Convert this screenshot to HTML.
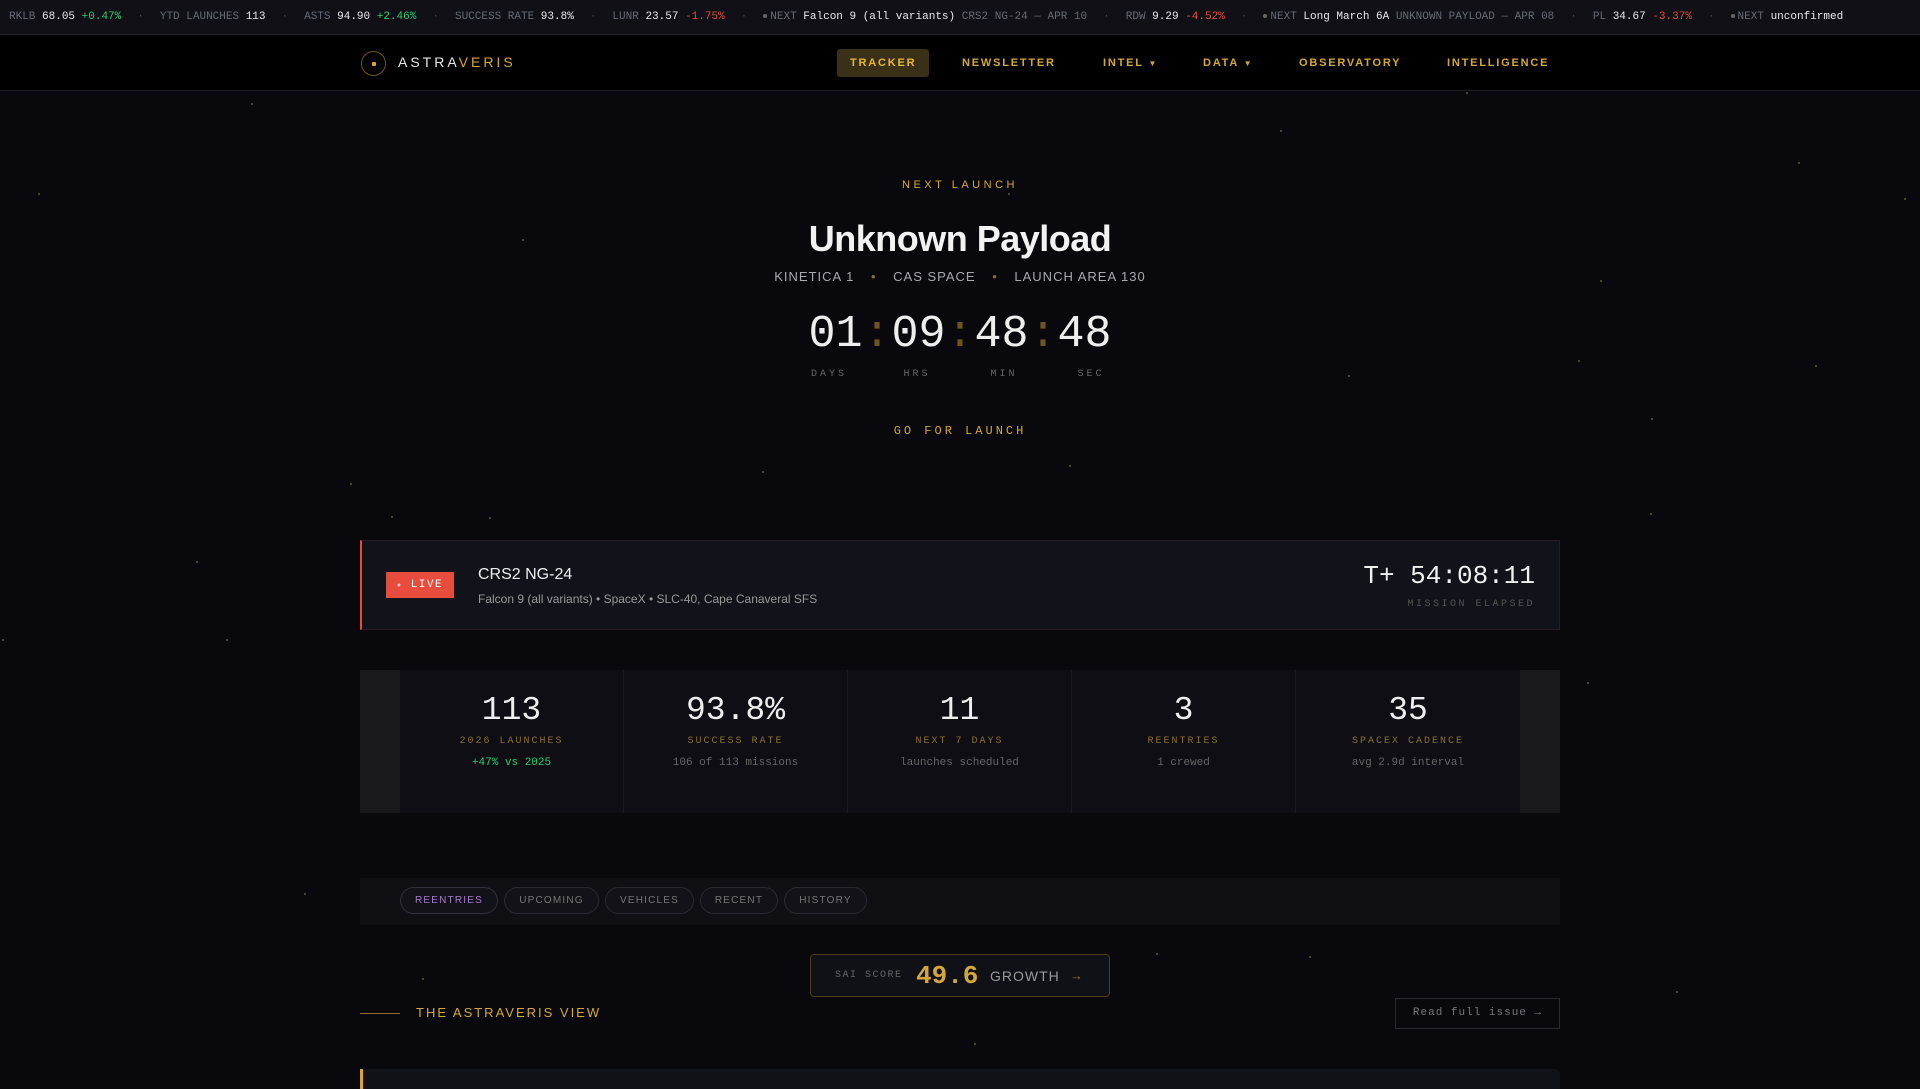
<!DOCTYPE html>
<html><head><meta charset="utf-8">
<style>
*{box-sizing:border-box;margin:0;padding:0}
body{width:1920px;height:1080px;overflow:hidden;background:#09090d;font-family:"Liberation Sans",sans-serif;color:#ddd;position:relative}
.mono{font-family:"Liberation Mono",monospace}
.ticker{position:absolute;left:0;top:0;width:1920px;height:35px;background:#101016;border-bottom:1px solid #24242c;white-space:nowrap;font-family:"Liberation Mono",monospace;font-size:11px;line-height:35px;padding-left:9px;color:#666a76;letter-spacing:0}
.ticker b{font-weight:normal;color:#e8e8ee}
.ticker .g{color:#2ecc71}.ticker .r{color:#e74c3c}
.ticker .s{color:#444;padding:0 16px}
.ticker .d{display:inline-block;width:4px;height:4px;border-radius:50%;background:#666;vertical-align:middle;margin-right:3px}
nav{position:absolute;top:35px;left:0;width:1920px;height:56px;background:#000;border-bottom:1px solid #1d1d24}
.logo{position:absolute;left:361px;top:16px;width:25px;height:25px;border:1px solid #6b5520;border-radius:50%}
.logo:after{content:"";position:absolute;left:10px;top:10px;width:4px;height:4px;background:#d4a838;border-radius:1px}
.brand{position:absolute;left:398px;top:19px;font-size:14px;letter-spacing:3px;color:#e8e8e8}
.brand span{color:#d4a838}
.nv{position:absolute;top:14px;height:28px;line-height:28px;font-size:11px;font-weight:bold;letter-spacing:1.8px;color:#d4a838}
.nv.a{background:#3a3018;border-radius:3px;padding:0 13px;color:#e8b83a}
.star{position:absolute;width:2px;height:2px;background:#8a7a50;border-radius:50%;opacity:.7}
.c{position:absolute;left:0;width:1920px;text-align:center}
.live{position:absolute;left:360px;top:540px;width:1200px;height:90px;background:#12121a;border:1px solid #2a1c22;border-left:2px solid #e74c3c}
.stats{position:absolute;left:360px;top:670px;width:1200px;height:143px;background:#0e0e14}
.cell{position:absolute;top:0;width:224px;height:143px;text-align:center;border-right:1px solid #1a1a22}
.cell .n{font-family:"Liberation Mono",monospace;font-size:33px;color:#eee;margin-top:22px}
.cell .l{font-family:"Liberation Mono",monospace;font-size:10px;letter-spacing:2px;color:#8a7030;margin-top:7px}
.cell .s{font-family:"Liberation Mono",monospace;font-size:11px;color:#666;margin-top:10px}
.pill{position:absolute;top:887px;height:27px;line-height:25px;border:1px solid #2a2a33;border-radius:14px;font-size:10px;letter-spacing:1.2px;color:#777;text-align:center;background:#121218}
</style></head><body>
<div class="ticker">RKLB <b>68.05</b> <span class="g">+0.47%</span><span class="s">·</span>YTD LAUNCHES <b>113</b><span class="s">·</span>ASTS <b>94.90</b> <span class="g">+2.46%</span><span class="s">·</span>SUCCESS RATE <b>93.8%</b><span class="s">·</span>LUNR <b>23.57</b> <span class="r">-1.75%</span><span class="s">·</span><span class="d"></span>NEXT <b>Falcon 9 (all variants)</b> CRS2 NG-24 — APR 10<span class="s">·</span>RDW <b>9.29</b> <span class="r">-4.52%</span><span class="s">·</span><span class="d"></span>NEXT <b>Long March 6A</b> UNKNOWN PAYLOAD — APR 08<span class="s">·</span>PL <b>34.67</b> <span class="r">-3.37%</span><span class="s">·</span><span class="d"></span>NEXT <b>unconfirmed</b></div>
<nav>
<div class="logo"></div>
<div class="brand">ASTRA<span>VERIS</span></div>
<div class="nv a" style="left:837px">TRACKER</div>
<div class="nv" style="left:962px">NEWSLETTER</div>
<div class="nv" style="left:1103px">INTEL <span style="font-size:8px">▼</span></div>
<div class="nv" style="left:1203px">DATA <span style="font-size:8px">▼</span></div>
<div class="nv" style="left:1299px">OBSERVATORY</div>
<div class="nv" style="left:1447px">INTELLIGENCE</div>
</nav>
<div class="star" style="left:251px;top:103px"></div><div class="star" style="left:38px;top:193px"></div><div class="star" style="left:522px;top:239px"></div><div class="star" style="left:1280px;top:130px"></div><div class="star" style="left:1466px;top:92px"></div><div class="star" style="left:1798px;top:162px"></div><div class="star" style="left:1904px;top:198px"></div><div class="star" style="left:1578px;top:360px"></div><div class="star" style="left:1348px;top:375px"></div><div class="star" style="left:1069px;top:465px"></div><div class="star" style="left:391px;top:516px"></div><div class="star" style="left:489px;top:517px"></div><div class="star" style="left:196px;top:561px"></div><div class="star" style="left:350px;top:483px"></div><div class="star" style="left:2px;top:639px"></div><div class="star" style="left:226px;top:639px"></div><div class="star" style="left:1650px;top:513px"></div><div class="star" style="left:1587px;top:682px"></div><div class="star" style="left:304px;top:893px"></div><div class="star" style="left:422px;top:978px"></div><div class="star" style="left:1156px;top:953px"></div><div class="star" style="left:1309px;top:956px"></div><div class="star" style="left:1676px;top:991px"></div><div class="star" style="left:974px;top:1043px"></div><div class="star" style="left:1008px;top:193px"></div><div class="star" style="left:1600px;top:280px"></div><div class="star" style="left:1815px;top:365px"></div><div class="star" style="left:1651px;top:418px"></div><div class="star" style="left:762px;top:471px"></div>
<div class="c" style="top:179px;font-size:11px;letter-spacing:3.5px;color:#d4a838">NEXT LAUNCH</div>
<div class="c" style="top:218px;font-size:36px;font-weight:bold;color:#f2f2f2;letter-spacing:-.5px">Unknown Payload</div>
<div class="c" style="top:269px;font-size:13px;letter-spacing:1px;color:#a8a8b0">KINETICA 1 <span style="color:#8a7030;padding:0 12px">•</span> CAS SPACE <span style="color:#8a7030;padding:0 12px">•</span> LAUNCH AREA 130</div>
<div class="c mono" style="top:307px;font-size:45px;color:#eee;line-height:56px">01<span style="color:#6b5520;padding:0 1px">:</span>09<span style="color:#6b5520;padding:0 1px">:</span>48<span style="color:#6b5520;padding:0 1px">:</span>48</div>
<div class="mono" style="position:absolute;top:369px;left:800px;width:58px;text-align:center;font-size:10px;letter-spacing:3px;color:#666">DAYS</div>
<div class="mono" style="position:absolute;top:369px;left:888px;width:58px;text-align:center;font-size:10px;letter-spacing:3px;color:#666">HRS</div>
<div class="mono" style="position:absolute;top:369px;left:975px;width:58px;text-align:center;font-size:10px;letter-spacing:3px;color:#666">MIN</div>
<div class="mono" style="position:absolute;top:369px;left:1062px;width:58px;text-align:center;font-size:10px;letter-spacing:3px;color:#666">SEC</div>
<div class="c mono" style="top:424px;font-size:12px;letter-spacing:3px;color:#d4a838">GO FOR LAUNCH</div>
<div class="live">
<div style="position:absolute;left:24px;top:31px;width:68px;height:26px;background:#e74c3c;color:#fff;font-family:'Liberation Mono',monospace;font-size:11px;letter-spacing:1.5px;line-height:26px;text-align:center"><span style="font-size:7px;opacity:.7">●</span> LIVE</div>
<div style="position:absolute;left:116px;top:25px;font-size:16px;color:#eee">CRS2 NG-24</div>
<div style="position:absolute;left:116px;top:51px;font-size:12px;color:#999">Falcon 9 (all variants) • SpaceX • SLC-40, Cape Canaveral SFS</div>
<div class="mono" style="position:absolute;right:24px;top:20px;font-size:26px;color:#f0f0f0">T+ 54:08:11</div>
<div class="mono" style="position:absolute;right:24px;top:58px;font-size:10px;letter-spacing:2.5px;color:#555">MISSION ELAPSED</div>
</div>
<div class="stats">
<div style="position:absolute;left:0;top:0;width:40px;height:143px;background:#18181d"></div>
<div style="position:absolute;right:0;top:0;width:40px;height:143px;background:#18181d"></div>
<div class="cell" style="left:40px"><div class="n">113</div><div class="l">2026 LAUNCHES</div><div class="s" style="color:#2ecc71">+47% vs 2025</div></div>
<div class="cell" style="left:264px"><div class="n">93.8%</div><div class="l">SUCCESS RATE</div><div class="s">106 of 113 missions</div></div>
<div class="cell" style="left:488px"><div class="n">11</div><div class="l">NEXT 7 DAYS</div><div class="s">launches scheduled</div></div>
<div class="cell" style="left:712px"><div class="n">3</div><div class="l">REENTRIES</div><div class="s">1 crewed</div></div>
<div class="cell" style="left:936px;border-right:none"><div class="n">35</div><div class="l">SPACEX CADENCE</div><div class="s">avg 2.9d interval</div></div>
</div>
<div style="position:absolute;left:360px;top:878px;width:1200px;height:47px;background:#0f0f14"></div>
<div class="pill" style="left:400px;width:98px;color:#a67cd0;border-color:#33303e">REENTRIES</div>
<div class="pill" style="left:504px;width:95px">UPCOMING</div>
<div class="pill" style="left:605px;width:89px">VEHICLES</div>
<div class="pill" style="left:700px;width:78px">RECENT</div>
<div class="pill" style="left:784px;width:83px">HISTORY</div>
<div style="position:absolute;left:810px;top:954px;width:300px;height:43px;border:1px solid #4a3c1c;border-radius:4px;background:#101116">
<span class="mono" style="position:absolute;left:24px;top:15px;font-size:10px;letter-spacing:1.5px;color:#666">SAI SCORE</span>
<span class="mono" style="position:absolute;left:105px;top:6px;font-size:26px;font-weight:bold;color:#d4a838">49.6</span>
<span style="position:absolute;left:179px;top:13px;font-size:14px;letter-spacing:1px;color:#999">GROWTH</span>
<span style="position:absolute;left:259px;top:13px;font-size:13px;color:#8a7030">→</span>
</div>
<div style="position:absolute;left:360px;top:1013px;width:40px;height:1px;background:#8a7030"></div>
<div style="position:absolute;left:416px;top:1005px;font-size:13px;letter-spacing:2px;color:#d4a838">THE ASTRAVERIS VIEW</div>
<div class="mono" style="position:absolute;left:1395px;top:998px;width:165px;height:31px;border:1px solid #2a2a33;font-size:11px;letter-spacing:1px;color:#777;line-height:29px;text-align:center">Read full issue →</div>
<div style="position:absolute;left:360px;top:1069px;width:1200px;height:20px;background:#111218;border-left:3px solid #d4a838;border-radius:0 6px 0 0"></div>
</body></html>
